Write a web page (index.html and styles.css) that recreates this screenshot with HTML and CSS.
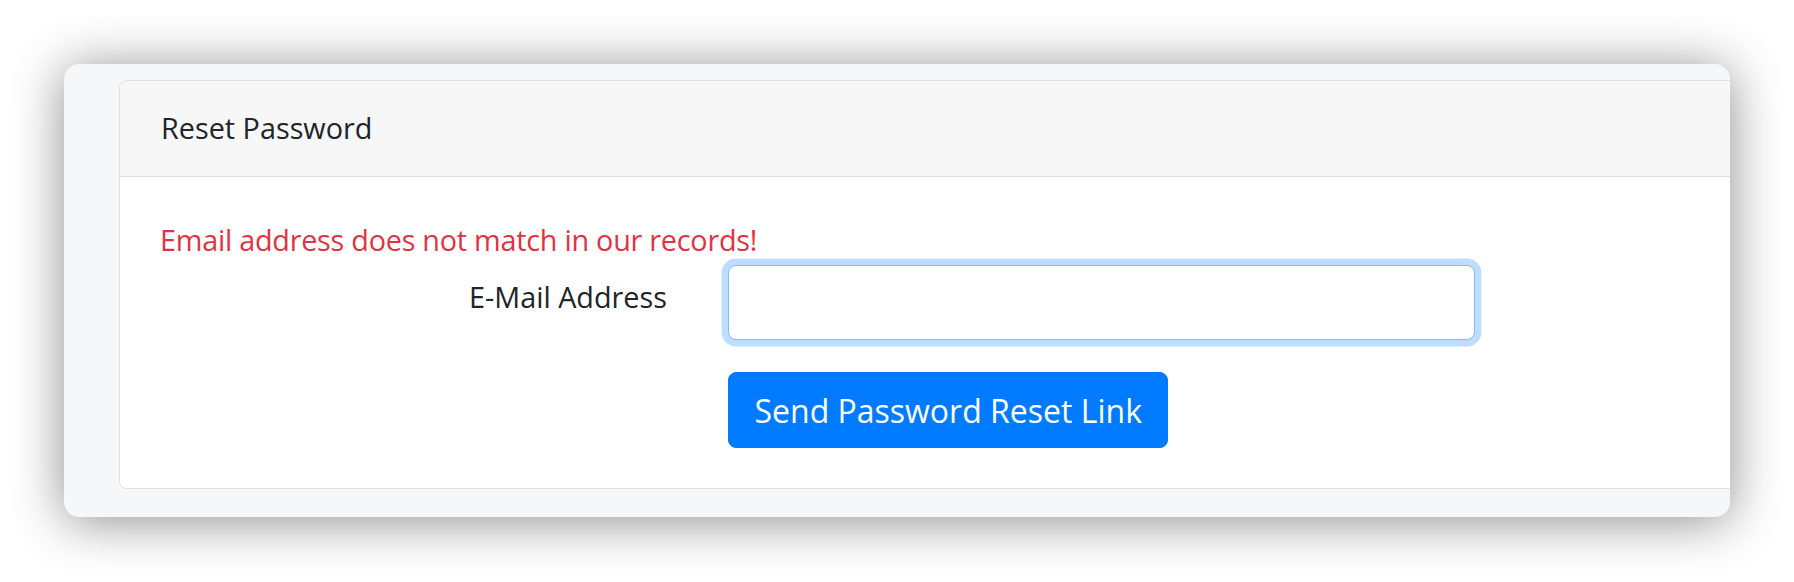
FILE: index.html
```html
<!DOCTYPE html>
<html lang="en">
<head>
<meta charset="utf-8">
<title>Reset Password</title>
<link rel="stylesheet" href="styles.css">
</head>
<body>
<div class="stage">
  <div class="window">
    <div class="card">
      <div class="card-header">Reset Password</div>
      <div class="card-body">
        <div class="error">Email address does not match in our records!</div>
        <form class="form">
          <div class="form-row">
            <label class="form-label" for="email">E-Mail Address</label>
            <input class="form-input" id="email" type="email" name="email">
          </div>
          <div class="form-row form-row-actions">
            <span class="form-label"></span>
            <button class="btn-primary" type="button">Send Password Reset Link</button>
          </div>
        </form>
      </div>
    </div>
  </div>
</div>
</body>
</html>
```
FILE: styles.css
```css
html, body {
  margin: 0;
  padding: 0;
  background: #ffffff;
}

body {
  font-family: "Open Sans", "Liberation Sans", sans-serif;
  font-size: 28.8px;
  line-height: 1.6;
  color: #212529;
}

.stage {
  padding: 64px 64px 65px 64px;
  overflow: hidden;
  height: 582px;
  box-sizing: border-box;
}

.window {
  width: 1666px;
  box-sizing: border-box;
  padding: 16px 0 28px 55px;
  background: #f6f7f9;
  border-radius: 15px;
  overflow: hidden;
  box-shadow: 0 4px 52px rgba(0, 0, 0, 0.45);
}

.card {
  width: 1700px;
  background: #ffffff;
  border: 1px solid #dfdfdf;
  border-radius: 8px;
}

.card-header {
  padding: 24px 40px 25px 41px;
  background: #f7f7f7;
  border-bottom: 1px solid #dfdfdf;
  border-radius: 8px 8px 0 0;
  height: 46px;
}

.card-body {
  padding: 40px;
}

.error {
  color: #dc3545;
  letter-spacing: -0.25px;
  height: 46px;
  margin-bottom: 2px;
}

.form {
  margin: 0;
}

.form-row {
  display: flex;
  align-items: flex-start;
  gap: 61px;
}

.form-label {
  width: 507px;
  flex: none;
  text-align: right;
  margin-top: 9px;
  line-height: 46px;
}

.form-input {
  box-sizing: border-box;
  width: 747px;
  height: 75px;
  margin: 0;
  padding: 0 24px;
  border: 1px solid #80bdff;
  border-radius: 8px;
  background: #ffffff;
  font: inherit;
  box-shadow: 0 0 0 6.4px rgba(0, 123, 255, 0.25);
  outline: none;
}

.form-row-actions {
  margin-top: 32px;
}

.form-row-actions .form-label {
  margin-top: 0;
}

.btn-primary {
  margin: 0;
  padding: 11.5px 25.5px;
  border: 1px solid #007bff;
  border-radius: 8px;
  background: #007bff;
  color: #ffffff;
  font-family: "Open Sans", "Liberation Sans", sans-serif;
  font-size: 32px;
  line-height: 51px;
  cursor: pointer;
}
```
